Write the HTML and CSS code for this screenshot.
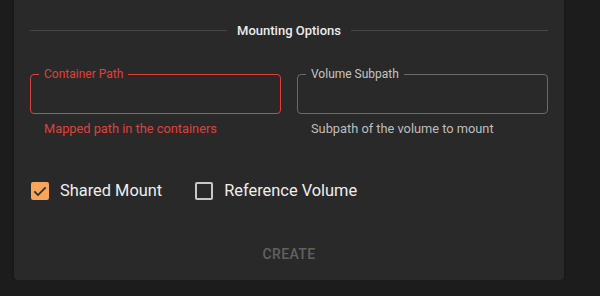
FILE: index.html
```html
<!DOCTYPE html>
<html lang="en">
<head>
    <meta charset="UTF-8">
    <title>Create Volume Mount</title>
    <link rel="stylesheet" href="styles.css">
</head>
<body>
<div class="page">
    <div class="card">
        <div class="divider">
            <span class="divider-line"></span>
            <span class="divider-text">Mounting Options</span>
            <span class="divider-line"></span>
        </div>

        <div class="fields">
            <div class="field error">
                <fieldset class="outline">
                    <legend>Container Path</legend>
                    <input type="text" class="input">
                </fieldset>
                <div class="helper">Mapped path in the containers</div>
            </div>
            <div class="field">
                <fieldset class="outline">
                    <legend>Volume Subpath</legend>
                    <input type="text" class="input">
                </fieldset>
                <div class="helper">Subpath of the volume to mount</div>
            </div>
        </div>

        <div class="checks">
            <label class="check">
                <span class="box checked">
                    <svg width="16" height="16" viewBox="0 0 24 24">
                        <path d="M3.5 12.5l5.5 5.5L20.5 6.5" fill="none" stroke="#2a2a2a" stroke-width="2.4"/>
                    </svg>
                </span>
                <span class="check-label">Shared Mount</span>
            </label>
            <label class="check">
                <span class="box"></span>
                <span class="check-label">Reference Volume</span>
            </label>
        </div>

        <div class="actions">
            <button class="btn" disabled>Create</button>
        </div>
    </div>
</div>
</body>
</html>
```

FILE: styles.css
```css
* {
    box-sizing: border-box;
}

body {
    margin: 0;
    background-color: #1c1c1c;
    font-family: Roboto, "Noto Sans", sans-serif;
}

.page {
    padding: 0 36px 0 14px;
}

.card {
    margin-top: -10px;
    height: 290px;
    background-color: #292929;
    border-radius: 4px;
    box-shadow: 0 1px 3px rgba(0, 0, 0, 0.35);
    padding: 31px 16px 0 16px;
}

.divider {
    display: flex;
    align-items: center;
    gap: 10px;
    height: 18px;
}

.divider-line {
    flex: 1;
    height: 1px;
    background-color: #474747;
}

.divider-text {
    font-size: 13px;
    font-weight: 500;
    color: #ececec;
}

.fields {
    display: grid;
    grid-template-columns: 1fr 1fr;
    gap: 16px;
    margin-top: 28px;
}

.outline {
    margin: 0;
    padding: 0 8px;
    height: 47px;
    border: 1px solid #6a6a6a;
    border-radius: 4px;
}

.outline legend {
    padding: 0 5px;
    font-size: 12px;
    line-height: 14px;
    color: #c4c4c4;
}

.input {
    width: 100%;
    border: none;
    background: transparent;
    outline: none;
    height: 30px;
}

.helper {
    margin-top: 7px;
    padding-left: 14px;
    font-size: 12.8px;
    line-height: 15px;
    color: #bdbdbd;
}

.error .outline {
    border-color: #e0403a;
}

.error legend,
.error .helper {
    color: #e0403a;
}

.checks {
    display: flex;
    align-items: center;
    gap: 33px;
    margin-top: 45px;
    padding-left: 1px;
}

.check {
    display: flex;
    align-items: center;
    gap: 11px;
}

.box {
    width: 18px;
    height: 18px;
    border: 2px solid #c8c8c8;
    border-radius: 2px;
    display: flex;
    align-items: center;
    justify-content: center;
}

.box.checked {
    border: none;
    background-color: #f6a55a;
}

.check-label {
    font-size: 16.4px;
    color: #eeeeee;
}

.actions {
    display: flex;
    justify-content: center;
    margin-top: 40px;
}

.btn {
    background: none;
    border: none;
    font-family: Roboto, sans-serif;
    font-size: 14px;
    font-weight: 500;
    letter-spacing: 0.4px;
    text-transform: uppercase;
    color: #616161;
    padding: 6px 8px;
}
```
